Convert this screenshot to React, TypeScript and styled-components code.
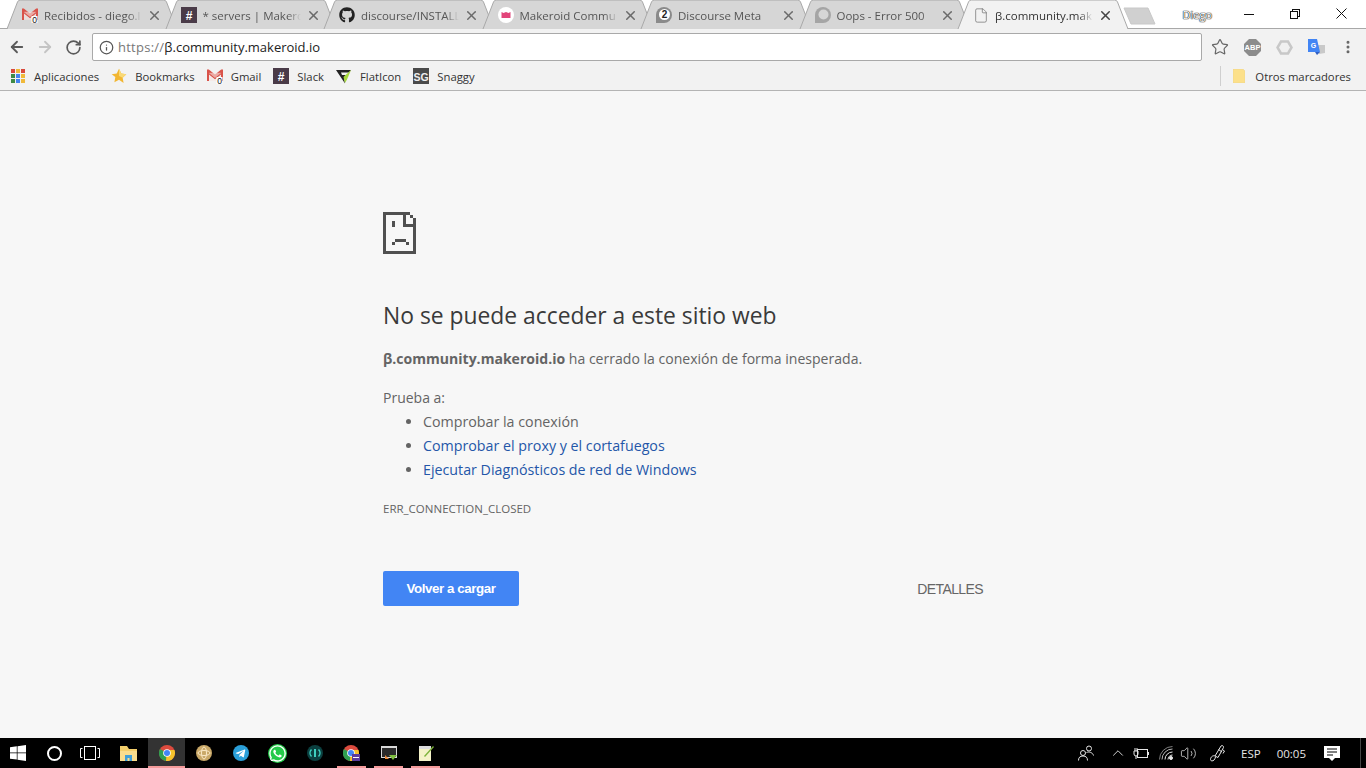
import styled, { createGlobalStyle } from "styled-components";
import { FaGithub, FaWhatsapp, FaTelegramPlane } from "react-icons/fa";
import { ArrowLeft, ArrowRight, RotateCw, Info, Star, X, File, EllipsisVertical, ChevronUp, Volume2 } from "lucide-react";

const GlobalStyle = createGlobalStyle`
  html, body {
    margin: 0;
    padding: 0;
    width: 1366px;
    height: 768px;
    overflow: hidden;
    background: #f7f7f7;
  }
  * { box-sizing: border-box; }
`;

const uiFont = `"Open Sans", "Noto Sans", sans-serif`;
const arial = `"Liberation Sans", Arial, sans-serif`;

//styles
const Page = styled.div`
  width: 1366px;
  height: 768px;
  display: flex;
  flex-direction: column;
  font-family: ${uiFont};
`;

const TitleBar = styled.div`
  height: 29px;
  background: #fff;
  display: flex;
  padding-left: 6px;
  border-bottom: 1px solid #a8a8a8;
  flex: none;
`;

const Tabs = styled.div`
  display: flex;
  height: 29px;
`;

const Tab = styled.div<{ $active?: boolean }>`
  position: relative;
  width: 172px;
  height: 29px;
  margin-right: -13.5px;
  padding: 1px 0 0 16px;
  display: flex;
  align-items: center;
  z-index: ${(p) => (p.$active ? 2 : 1)};
  font-size: 11.5px;
  color: ${(p) => (p.$active ? "#333" : "#555")};
`;

const TabShape = styled.svg`
  position: absolute;
  left: 0;
  top: 0;
`;

const Favicon = styled.span`
  position: relative;
  width: 16px;
  height: 16px;
  flex: none;
  display: flex;
  align-items: center;
  justify-content: center;
`;

const TabTitle = styled.span`
  position: relative;
  margin-left: 6px;
  width: 98px;
  white-space: nowrap;
  overflow: hidden;
  mask-image: linear-gradient(to right, #000 86%, transparent);
`;

const TabClose = styled(X)<{ $active?: boolean }>`
  position: relative;
  flex: none;
  margin-left: 5px;
  color: ${(p) => (p.$active ? "#444" : "#6a6a6a")};
`;

const NewTab = styled.svg`
  margin: 7px 0 0 7px;
  flex: none;
`;

const Profile = styled.div`
  width: 29px;
  margin-left: 27px;
  padding-top: 7px;
  font-size: 11px;
  color: #fff;
  text-shadow: 0 0 1px #222, 0 0 1px #222, 0 0 1px #222;
`;

const WindowControls = styled.div`
  margin-left: auto;
  padding-right: 2px;
  display: flex;
`;

const WindowButton = styled.div`
  width: 46px;
  height: 27px;
  display: flex;
  align-items: center;
  justify-content: center;
  color: #111;
`;

const Toolbar = styled.div`
  height: 33px;
  background: #f2f2f2;
  display: flex;
  align-items: flex-start;
  padding: 4px 0 0 3px;
  flex: none;
`;

const NavButton = styled.div<{ $off?: boolean }>`
  width: 28px;
  height: 28px;
  display: flex;
  align-items: center;
  justify-content: center;
  color: ${(p) => (p.$off ? "#c4c4c4" : "#5a5a5a")};
`;

const Omnibox = styled.div`
  width: 1110px;
  height: 28px;
  margin-left: 5px;
  background: #fff;
  border: 1px solid #a9a9a9;
  border-radius: 2px;
  display: flex;
  align-items: center;
  padding-left: 6px;
  font-size: 13px;
  color: #222;
`;

const Scheme = styled.span`
  color: #777;
  margin-left: 4px;
  letter-spacing: 0.25px;
`;

const Extensions = styled.div`
  display: flex;
  margin-left: 2px;
  color: #666;
`;

const ExtSlot = styled.div`
  width: 32px;
  height: 28px;
  display: flex;
  align-items: center;
  justify-content: center;
`;

const BookmarkBar = styled.div`
  height: 29px;
  background: #f2f2f2;
  border-bottom: 1px solid #b4b4b4;
  display: flex;
  align-items: center;
  padding-left: 11px;
  font-size: 11.3px;
  color: #333;
  flex: none;
`;

const Bookmark = styled.div`
  display: flex;
  align-items: center;
  gap: 8px;
  margin-right: 12px;
`;

const OtherBookmarks = styled.div`
  margin-left: auto;
  display: flex;
  align-items: center;
  height: 20px;
  padding-left: 12px;
  margin-right: 15px;
  gap: 10px;
  border-left: 1px solid #cfcfcf;
`;

const Content = styled.main`
  flex: 1;
  background: #f7f7f7;
  padding: 121px 0 0 383px;
  color: #646464;
  font-size: 14.25px;
`;

const Interstitial = styled.div`
  width: 600px;
`;

const SadPageIcon = styled.svg`
  display: block;
`;

const Heading = styled.h1`
  margin: 41px 0 0;
  font-size: 22.85px;
  font-weight: 400;
  line-height: 42px;
  color: #3a3a3a;
`;

const Summary = styled.p`
  margin: 10px 0 0;
  line-height: 24px;
  font-size: 14.05px;
  strong { font-weight: 700; }
`;

const Suggest = styled.p`
  margin: 15px 0 0;
  line-height: 24px;
  font-size: 14px;
`;

const List = styled.ul`
  margin: 0;
  padding-left: 40px;
  line-height: 24px;
`;

const Hint = styled.a`
  color: #2456a8;
  text-decoration: none;
`;

const ErrorCode = styled.div`
  margin-top: 15px;
  font-size: 11.5px;
  line-height: 24px;
  color: #646464;
`;

const Actions = styled.div`
  margin-top: 50px;
  display: flex;
  justify-content: space-between;
  align-items: center;
`;

const ReloadButton = styled.button`
  width: 136px;
  height: 35px;
  border: 0;
  border-radius: 2px;
  background: #4285f4;
  color: #fff;
  letter-spacing: -0.4px;
  font: 700 13.3px ${arial};
`;

const Details = styled.span`
  font: 14px ${arial};
  letter-spacing: -0.6px;
  color: #666;
`;

const Taskbar = styled.footer`
  height: 30px;
  background: #000;
  display: flex;
  align-items: center;
  flex: none;
  color: #fff;
`;

const TaskSlot = styled.div<{ $width?: number; $open?: boolean; $active?: boolean }>`
  position: relative;
  width: ${(p) => p.$width ?? 37}px;
  height: 30px;
  display: flex;
  align-items: center;
  justify-content: center;
  background: ${(p) => (p.$active ? "#333" : "transparent")};

  &::after {
    content: "";
    display: ${(p) => (p.$open ? "block" : "none")};
    position: absolute;
    left: ${(p) => (p.$active ? 0 : 4)}px;
    right: ${(p) => (p.$active ? 0 : 4)}px;
    bottom: 0;
    height: 2px;
    background: #f49a9a;
  }
`;

const Tray = styled.div`
  margin-left: auto;
  display: flex;
  align-items: center;
  font-size: 11.5px;
  height: 30px;
  color: #e6e6e6;
`;

const TrayItem = styled.div<{ $gap?: number }>`
  margin-left: ${(p) => p.$gap ?? 0}px;
  display: flex;
  align-items: center;
  justify-content: center;
`;

const DesktopEdge = styled.div`
  width: 1px;
  height: 30px;
  margin: 0 5px 0 20px;
  background: #444;
`;

const Circle = styled.div`
  width: 15px;
  height: 15px;
  border: 2px solid #fff;
  border-radius: 50%;
`;

const RoundIcon = styled.div<{ $bg: string }>`
  width: 16px;
  height: 16px;
  border-radius: 50%;
  background: ${(p) => p.$bg};
  display: flex;
  align-items: center;
  justify-content: center;
`;

const WhatsApp = styled(FaWhatsapp)`
  background: #25c94a;
  border-radius: 50%;
`;

//icons
function GmailIcon() {
  return (
    <svg width="16" height="15" viewBox="0 0 16 15">
      <path d="M0 .5h1.800L8 5.500 14.200.5H16V12h-2V4L8 8.800 2 4v8H0z" fill="#d9534a" />
      <rect x="2" y="3.800" width="12" height="8" fill="#f6e3e0" opacity=".6" />
      <path d="M2 4l6 4.800L14 4v1.500L8 10.300 2 5.500z" fill="#d9534a" />
      <rect x="9.500" y="8" width="6" height="7" fill="#fff" />
      <text x="10.300" y="14.700" fontSize="8.500" fontFamily="Liberation Sans" fill="#111">0</text>
    </svg>
  );
}

function SlackIcon() {
  return (
    <svg width="16" height="16" viewBox="0 0 16 16">
      <rect width="16" height="16" fill="#4a3b48" />
      <text x="8" y="12.500" fontSize="12" fontWeight="700" textAnchor="middle" fontFamily="Liberation Sans" fill="#fff">#</text>
    </svg>
  );
}

function MakeroidIcon() {
  return (
    <svg width="16" height="16" viewBox="0 0 16 16">
      <circle cx="8" cy="8" r="8" fill="#fff" />
      <path d="M3.500 5l2 1 2.500-1 2.500 1 2-1v6h-9z" fill="#e2457a" />
    </svg>
  );
}

function MetaIcon() {
  return (
    <svg width="16" height="16" viewBox="0 0 16 16">
      <path d="M8 0a8 8 0 0 1 0 16H0V8a8 8 0 0 1 8-8z" fill="#8a8a8a" />
      <circle cx="8.500" cy="7.500" r="5.500" fill="#fff" />
      <text x="8.500" y="11" fontSize="10" fontWeight="700" textAnchor="middle" fontFamily="Liberation Sans" fill="#222">2</text>
    </svg>
  );
}

function OopsIcon() {
  return (
    <svg width="16" height="16" viewBox="0 0 16 16">
      <path d="M8 0a8 8 0 0 1 0 16H0V8a8 8 0 0 1 8-8z" fill="#a5a5a5" />
      <circle cx="8.500" cy="7.500" r="5" fill="#d6d6d6" />
    </svg>
  );
}

function AppsIcon() {
  const colors = ["#d9493c", "#f0b93a", "#d9493c", "#3f8b46", "#4584f0", "#f0b93a", "#3f8b46", "#4584f0", "#f0b93a"];
  return (
    <svg width="15" height="14" viewBox="0 0 15 14">
      {colors.map((c, i) => (
        <rect key={i} x={(i % 3) * 5} y={Math.floor(i / 3) * 5} width="4" height="4" fill={c} />
      ))}
    </svg>
  );
}

function StarIcon() {
  return (
    <svg width="16" height="16" viewBox="0 0 24 24">
      <path d="M12 1l3.400 7.200 7.600 1-5.500 5.400 1.400 7.900L12 17.700l-6.900 3.800 1.400-7.900L1 9.200l7.600-1z" fill="#f2b632" />
      <path d="M12 1l3.400 7.200 7.600 1-5.500 5.400L12 12z" fill="#f9d976" />
    </svg>
  );
}

function FlaticonIcon() {
  return (
    <svg width="16" height="15" viewBox="0 0 16 15">
      <path d="M0 1h15l-2 2.500H5l1 2.500h4l-2 2.500 1 6z" fill="#222" />
      <path d="M7.500 8L15 1l-4 9.500L9 14z" fill="#a6d83c" />
    </svg>
  );
}

function SnaggyIcon() {
  return (
    <svg width="16" height="16" viewBox="0 0 16 16">
      <rect width="16" height="16" fill="#4a4a4a" />
      <text x="8" y="12.500" fontSize="10.500" fontWeight="700" textAnchor="middle" fontFamily="Liberation Sans Narrow, Liberation Sans" fill="#eee">SG</text>
    </svg>
  );
}

function ChromeIcon() {
  return (
    <svg width="16" height="16" viewBox="0 0 16 16">
      <circle cx="8" cy="8" r="8" fill="#dd4b3e" />
      <path d="M8 8L1 4a8 8 0 0 0 6 12z" fill="#2f9e4f" />
      <path d="M8 5h7.400A8 8 0 0 1 7 16z" fill="#f5c32c" />
      <circle cx="8" cy="8" r="3.800" fill="#fff" />
      <circle cx="8" cy="8" r="3" fill="#4285f4" />
    </svg>
  );
}

function ProfileChromeIcon() {
  return (
    <svg width="17" height="17" viewBox="0 0 17 17">
      <circle cx="8" cy="8" r="8" fill="#dd4b3e" />
      <path d="M8 8L1 4a8 8 0 0 0 6 12z" fill="#2f9e4f" />
      <path d="M8 5h7.400A8 8 0 0 1 7 16z" fill="#f5c32c" />
      <circle cx="8" cy="8" r="3.800" fill="#fff" />
      <circle cx="8" cy="8" r="3" fill="#4285f4" />
      <rect x="9" y="9" width="8" height="7" fill="#5b3b9c" />
      <rect x="10" y="12" width="6" height="1" fill="#fff" />
    </svg>
  );
}

function SadPage() {
  return (
    <SadPageIcon width="33" height="42" viewBox="0 0 33 42" shapeRendering="crispEdges" fill="#505050">
      <path d="M0 0h27v3H3v36h27V12h3v30H0z" />
      <path d="M20 0h3v12h10v3H20zM27 3h3v3h-3zM30 6h3v6h-3z" />
      <path d="M9 9h3v6H9zM12 27h11v3H12zM9 30h3v3H9zM23 30h3v3h-3z" />
    </SadPageIcon>
  );
}

function Minimize() {
  return (
    <svg width="10" height="10" viewBox="0 0 10 10" shapeRendering="crispEdges">
      <rect y="5" width="10" height="1" fill="currentColor" />
    </svg>
  );
}

function Restore() {
  return (
    <svg width="10" height="10" viewBox="0 0 10 10" fill="none" stroke="currentColor" shapeRendering="crispEdges">
      <rect x=".5" y="2.500" width="7" height="7" />
      <path d="M2.500 2V.5h7v7H8" />
    </svg>
  );
}

function CloseWin() {
  return (
    <svg width="11" height="11" viewBox="0 0 11 11" stroke="currentColor" strokeWidth="1">
      <path d="M.5.5l10 10M10.500.5l-10 10" />
    </svg>
  );
}

function ABP() {
  return (
    <svg width="17" height="17" viewBox="0 0 17 17">
      <path d="M5 0h7l5 5v7l-5 5H5l-5-5V5z" fill="#8c8c8c" />
      <text x="8.500" y="11.300" fontSize="7.500" fontWeight="700" textAnchor="middle" fontFamily="Liberation Sans" fill="#fff">ABP</text>
    </svg>
  );
}

function Hex() {
  return (
    <svg width="17" height="17" viewBox="0 0 17 17">
      <path d="M5 2.500h7l3.500 6-3.500 6H5l-3.500-6z" fill="#f0f0f0" stroke="#c8c8c8" strokeWidth="2.500" />
    </svg>
  );
}

function Translate() {
  return (
    <svg width="17" height="17" viewBox="0 0 17 17">
      <path d="M8 6h9v8l-6 1z" fill="#c9c9c9" />
      <path d="M0 0h9l3 13H0z" fill="#4285f4" />
      <path d="M7 13h5l-3 3z" fill="#2f5fc4" />
      <text x="5.500" y="8.500" fontSize="7" fontWeight="700" textAnchor="middle" fontFamily="Liberation Sans" fill="#fff">G</text>
    </svg>
  );
}

function BookmarkFolder() {
  return (
    <svg width="12" height="14" viewBox="0 0 12 14">
      <path d="M0 0h10l2 2v12H0z" fill="#fce08a" stroke="#ead08a" strokeWidth=".5" />
    </svg>
  );
}

function WindowsLogo() {
  return (
    <svg width="16" height="16" viewBox="0 0 16 16">
      <path d="M0 2.300l6.800-1v6.200H0zM7.500 1.200L16 0v7.500H7.500zM0 8.300h6.800v6.300L0 13.700zM7.500 8.300H16V16l-8.500-1.200z" fill="#fff" />
    </svg>
  );
}

function TaskView() {
  return (
    <svg width="20" height="14" viewBox="0 0 20 14" fill="none" stroke="#fff">
      <rect x="4.500" y=".5" width="11" height="13" />
      <path d="M2.500 2.500h-2v9h2M17.500 2.500h2v9h-2" />
    </svg>
  );
}

function ExplorerIcon() {
  return (
    <svg width="17" height="15" viewBox="0 0 17 15">
      <path d="M0 0h7l2 3h8v12H0z" fill="#f4cf6b" />
      <rect y="5" width="17" height="10" fill="#f9dd8d" />
      <path d="M5 9h7v6H9.500v-3h-2v3H5z" fill="#3f9fd8" />
    </svg>
  );
}

function AtomIcon() {
  return (
    <svg width="16" height="16" viewBox="0 0 16 16">
      <circle cx="8" cy="8" r="8" fill="#c9a868" />
      <ellipse cx="8" cy="8" rx="6" ry="2.500" fill="none" stroke="#fbe9c6" />
      <ellipse cx="8" cy="8" rx="2.500" ry="6" fill="none" stroke="#fbe9c6" />
    </svg>
  );
}

function TealIcon() {
  return (
    <svg width="16" height="16" viewBox="0 0 16 16" fill="none">
      <circle cx="8" cy="8" r="8" fill="#0b4040" />
      <path d="M4.500 4.500a5 5 0 0 0 0 7M11.500 4.500a5 5 0 0 1 0 7" stroke="#3fd0c0" strokeWidth="1.500" />
      <path d="M8 4v8" stroke="#3fd0c0" strokeWidth="2" />
    </svg>
  );
}

function ConsoleIcon() {
  return (
    <svg width="16" height="16" viewBox="0 0 16 16">
      <rect y="1" width="16" height="12" fill="#d8d8d8" />
      <rect x="1" y="3" width="14" height="9" fill="#2a2a2a" />
      <path d="M8 10l4 5 4-5z" fill="#7fbf3f" />
      <path d="M4 10l4 4H4z" fill="#e9893b" />
    </svg>
  );
}

function NotepadIcon() {
  return (
    <svg width="16" height="16" viewBox="0 0 16 16">
      <rect x="1" y="2" width="12" height="14" fill="#f4f2c8" />
      <rect x="1" y="1" width="12" height="3" fill="#ddd" />
      <path d="M6 11l9-10 1 1-9 10z" fill="#7db33a" />
    </svg>
  );
}

function PeopleTray() {
  return (
    <svg width="16" height="16" viewBox="0 0 16 16" fill="none" stroke="currentColor">
      <circle cx="5" cy="8" r="2.500" />
      <path d="M.5 15.500c0-3 1.500-4.500 4.500-4.500s4.500 1.500 4.500 4.500" />
      <circle cx="11" cy="3.500" r="2.500" />
      <path d="M8.500 7.500c2-1 6-.5 7 3" />
    </svg>
  );
}

function PowerTray() {
  return (
    <svg width="16" height="14" viewBox="0 0 16 14" fill="none" stroke="currentColor">
      <rect x="4.500" y="3.500" width="10" height="8" />
      <path d="M15.500 6v3" />
      <path d="M1 5h4v3a2 2 0 0 1-4 0zM2 2v3M4 2v3M3 10v3" />
    </svg>
  );
}

function WifiTray() {
  return (
    <svg width="14" height="14" viewBox="0 0 14 14" fill="none" stroke="currentColor">
      <path d="M.5 13.500a13 13 0 0 1 13-13" opacity=".55" />
      <path d="M3 13.500A10.500 10.500 0 0 1 13.500 3" opacity=".8" />
      <path d="M6 13.500A7.500 7.500 0 0 1 13.500 6M9 13.500a4.500 4.500 0 0 1 4.500-4.500" />
      <circle cx="12" cy="12" r="1.500" fill="currentColor" />
    </svg>
  );
}

function InkTray() {
  return (
    <svg width="16" height="17" viewBox="0 0 16 17" fill="none" stroke="currentColor">
      <path d="M5 11l6-10c1-1 3 0 2.500 1.500L8 12.500z" />
      <path d="M8.500 4.500L12 7M13 5l1.500 1-1.500 2.500" />
      <path d="M5 11c-2-1-4.500 1-4.500 3.500 0 2 3.500 2 4.500-1l.5-1.500" />
    </svg>
  );
}

function NotificationTray() {
  return (
    <svg width="16" height="15" viewBox="0 0 16 15">
      <path d="M0 0h16v12h-5l-3 3-3-3H0z" fill="#fff" />
      <path d="M3 3h10M3 6h10M3 9h6" stroke="#000" />
    </svg>
  );
}

const tabs = [
  { title: "Recibidos - diego.l", icon: <GmailIcon /> },
  { title: "* servers | Makero", icon: <SlackIcon /> },
  { title: "discourse/INSTALL", icon: <FaGithub size={16} color="#222" /> },
  { title: "Makeroid Commu", icon: <MakeroidIcon /> },
  { title: "Discourse Meta", icon: <MetaIcon /> },
  { title: "Oops - Error 500", icon: <OopsIcon /> },
  { title: "β.community.mak", icon: <File size={17} strokeWidth={1} color="#666" />, active: true },
];

export default function App() {
  return (
    <Page>
      <GlobalStyle />
      <TitleBar>
        <Tabs>
          {tabs.map((t) => (
            <Tab key={t.title} $active={t.active}>
              <TabShape width="172" height="29" viewBox="0 0 172 29">
                <path
                  d="M1 29L11.500 2q.8-2 3-2h143q2.200 0 3 2L171 29"
                  fill={t.active ? "#f2f2f2" : "#d6d6d6"}
                  stroke="#a8a8a8"
                />
              </TabShape>
              <Favicon>{t.icon}</Favicon>
              <TabTitle>{t.title}</TabTitle>
              <TabClose size={15} strokeWidth={2.4} $active={t.active} />
            </Tab>
          ))}
        </Tabs>
        <NewTab width="33" height="18" viewBox="0 0 33 18">
          <path d="M1 1h24l7 16H8z" fill="#d0d0d0" stroke="#c8c8c8" strokeLinejoin="round" />
        </NewTab>
        <Profile>Diego</Profile>
        <WindowControls>
          <WindowButton><Minimize /></WindowButton>
          <WindowButton><Restore /></WindowButton>
          <WindowButton><CloseWin /></WindowButton>
        </WindowControls>
      </TitleBar>
      <Toolbar>
        <NavButton><ArrowLeft size={18} strokeWidth={2.4} /></NavButton>
        <NavButton $off><ArrowRight size={18} strokeWidth={2.4} /></NavButton>
        <NavButton><RotateCw size={17} strokeWidth={2.4} /></NavButton>
        <Omnibox>
          <Info size={15} strokeWidth={2} color="#555" />
          <Scheme>https://</Scheme>β.community.makeroid.io
        </Omnibox>
        <Extensions>
          <ExtSlot><Star size={18} strokeWidth={1.6} /></ExtSlot>
          <ExtSlot><ABP /></ExtSlot>
          <ExtSlot><Hex /></ExtSlot>
          <ExtSlot><Translate /></ExtSlot>
          <ExtSlot><EllipsisVertical size={16} strokeWidth={2.5} /></ExtSlot>
        </Extensions>
      </Toolbar>
      <BookmarkBar>
        <Bookmark><AppsIcon />Aplicaciones</Bookmark>
        <Bookmark><StarIcon />Bookmarks</Bookmark>
        <Bookmark><GmailIcon />Gmail</Bookmark>
        <Bookmark><SlackIcon />Slack</Bookmark>
        <Bookmark><FlaticonIcon />FlatIcon</Bookmark>
        <Bookmark><SnaggyIcon />Snaggy</Bookmark>
        <OtherBookmarks>
          <BookmarkFolder />
          Otros marcadores
        </OtherBookmarks>
      </BookmarkBar>
      <Content>
        <Interstitial>
          <SadPage />
          <Heading>No se puede acceder a este sitio web</Heading>
          <Summary><strong>β.community.makeroid.io</strong> ha cerrado la conexión de forma inesperada.</Summary>
          <Suggest>Prueba a:</Suggest>
          <List>
            <li>Comprobar la conexión</li>
            <li><Hint>Comprobar el proxy y el cortafuegos</Hint></li>
            <li><Hint>Ejecutar Diagnósticos de red de Windows</Hint></li>
          </List>
          <ErrorCode>ERR_CONNECTION_CLOSED</ErrorCode>
          <Actions>
            <ReloadButton>Volver a cargar</ReloadButton>
            <Details>DETALLES</Details>
          </Actions>
        </Interstitial>
      </Content>
      <Taskbar>
        <TaskSlot $width={36}><WindowsLogo /></TaskSlot>
        <TaskSlot $width={36}><Circle /></TaskSlot>
        <TaskSlot $width={36}><TaskView /></TaskSlot>
        <TaskSlot $width={40}><ExplorerIcon /></TaskSlot>
        <TaskSlot $open $active><ChromeIcon /></TaskSlot>
        <TaskSlot><AtomIcon /></TaskSlot>
        <TaskSlot><RoundIcon $bg="#2a9fd9"><FaTelegramPlane size={11} color="#fff" /></RoundIcon></TaskSlot>
        <TaskSlot><WhatsApp size={19} color="#fff" /></TaskSlot>
        <TaskSlot><TealIcon /></TaskSlot>
        <TaskSlot $open><ProfileChromeIcon /></TaskSlot>
        <TaskSlot $open><ConsoleIcon /></TaskSlot>
        <TaskSlot $open><NotepadIcon /></TaskSlot>
        <Tray>
          <TrayItem><PeopleTray /></TrayItem>
          <TrayItem $gap={15}><ChevronUp size={18} strokeWidth={1.2} /></TrayItem>
          <TrayItem $gap={6}><PowerTray /></TrayItem>
          <TrayItem $gap={10}><WifiTray /></TrayItem>
          <TrayItem $gap={7}><Volume2 size={17} strokeWidth={1.1} /></TrayItem>
          <TrayItem $gap={13}><InkTray /></TrayItem>
          <TrayItem $gap={15}>ESP</TrayItem>
          <TrayItem $gap={16}>00:05</TrayItem>
          <TrayItem $gap={18}><NotificationTray /></TrayItem>
          <DesktopEdge />
        </Tray>
      </Taskbar>
    </Page>
  );
}
